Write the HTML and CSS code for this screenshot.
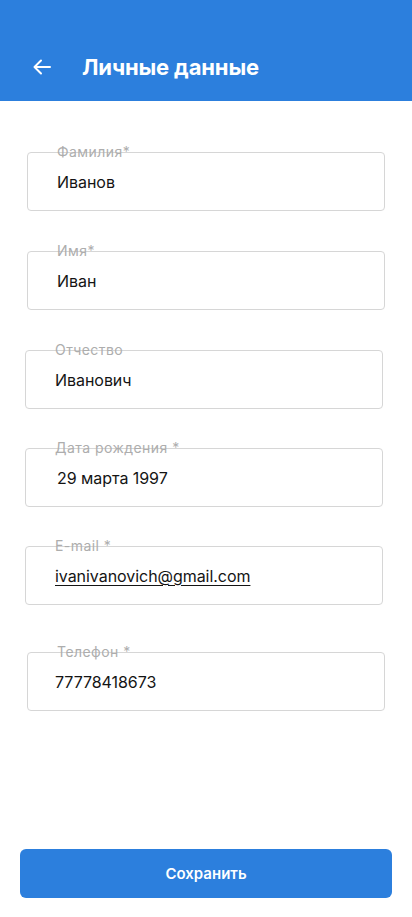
FILE: index.html
```html
<!DOCTYPE html>
<html lang="ru">
<head>
<meta charset="utf-8">
<link rel="stylesheet" href="styles.css">
</head>
<body>
<div class="page">
  <header class="topbar">
    <svg class="back" width="18" height="16" viewBox="0 0 18 16" fill="none" stroke="#fff" stroke-width="2" stroke-linecap="round" stroke-linejoin="round">
      <path d="M17 8H2"/><path d="M8 1.5L1.5 8L8 14.5"/>
    </svg>
    <h1 class="title">Личные данные</h1>
  </header>
  <main class="form">
    <div class="field f1">
      <span class="label">Фамилия*</span>
      <div class="box">Иванов</div>
    </div>
    <div class="field f2">
      <span class="label">Имя*</span>
      <div class="box">Иван</div>
    </div>
    <div class="field f3">
      <span class="label">Отчество</span>
      <div class="box">Иванович</div>
    </div>
    <div class="field f4">
      <span class="label">Дата рождения *</span>
      <div class="box shift">29 марта 1997</div>
    </div>
    <div class="field f5">
      <span class="label">E-mail *</span>
      <div class="box"><span class="link">ivanivanovich@gmail.com</span></div>
    </div>
    <div class="field f6">
      <span class="label">Телефон *</span>
      <div class="box unshift">77778418673</div>
    </div>
  </main>
  <div class="actions">
    <button class="save">Сохранить</button>
  </div>
</div>
</body>
</html>
```
FILE: styles.css
```css
* { box-sizing: border-box; }
html, body { margin: 0; padding: 0; background: #fff; }
body { font-family: Inter, "Noto Sans", sans-serif; color: #111; }
.page { min-height: 917px; display: flex; flex-direction: column; }
.topbar {
  height: 101px;
  background: #2c7fdd;
  display: flex;
  align-items: center;
  padding: 32px 0 0 33px;
}
.back { display: block; flex: none; }
.title {
  margin: 0 0 0 31px;
  color: #fff;
  font-size: 22px;
  font-weight: 700;
  letter-spacing: -0.15px;
}
.form { display: flex; flex-direction: column; padding-top: 51px; }
.field { position: relative; width: 358px; margin-left: 27px; }
.f2 { margin-top: 40px; }
.f3 { margin-top: 40px; margin-left: 25px; }
.f4 { margin-top: 39px; margin-left: 25px; }
.f5 { margin-top: 39px; margin-left: 25px; }
.f6 { margin-top: 47px; }
.label {
  position: absolute;
  left: 30px;
  top: -9px;
  font-size: 14px;
  line-height: 17px;
  letter-spacing: 0.45px;
  color: #adadad;
}
.box {
  height: 59px;
  border: 1px solid #d6d6d6;
  border-radius: 4px;
  display: flex;
  align-items: center;
  padding: 0 0 0 29px;
  font-size: 16px;
  letter-spacing: -0.05px;
  color: #141414;
}
.shift { padding-left: 31px; }
.unshift { padding-left: 27px; }
.link { text-decoration: underline; text-underline-offset: 3px; text-decoration-thickness: 1px; }
.actions { margin-top: auto; padding: 0 20px 19px; }
.save {
  width: 372px;
  height: 49px;
  border: 0;
  border-radius: 6px;
  background: #2c7fdd;
  color: #fff;
  font-family: Inter, "Noto Sans", sans-serif;
  font-size: 15px;
  font-weight: 600;
  display: block;
}
```
